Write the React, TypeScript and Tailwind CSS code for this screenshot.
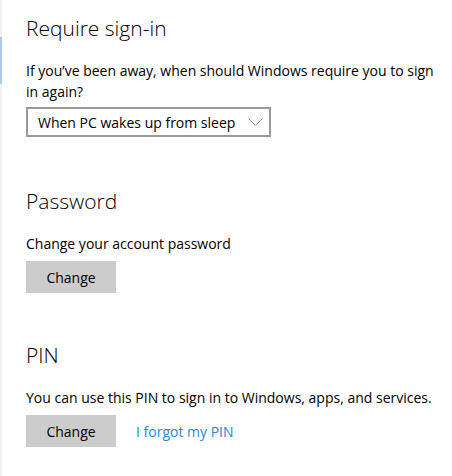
export default function App() {
  const font = { fontFamily: '"Open Sans", "Noto Sans", sans-serif' }
  return (
    <div className="flex w-[452px] h-[476px] bg-white text-black" style={font}>
      {/* left edge of nav pane */}
      <div className="flex flex-col w-[2px] bg-[#f2f2f2]">
        <div className="h-[37px]" />
        <div className="h-[47px] bg-[#a9cbea]" />
      </div>
      <div className="flex flex-col pl-[24px] pt-[14px]">
        <h2 className="text-[21px] leading-[28px] font-light">Require sign-in</h2>
        <p className="mt-[18px] text-[14px] leading-[21px] w-[420px]">
          If you’ve been away, when should Windows require you to sign in again?
        </p>
        <div className="mt-[5px] flex items-center justify-between w-[245px] h-[30px] border-2 border-[#999999] pl-[10px] pr-[6px]">
          <span className="text-[14px]">When PC wakes up from sleep</span>
          <svg width="15" height="8" viewBox="0 0 15 8" fill="none" stroke="#8a8a8a" strokeWidth="1">
            <path d="M0.5 0.5l7 7 7-7" />
          </svg>
        </div>

        <h2 className="mt-[50px] text-[21px] leading-[28px] font-light">Password</h2>
        <p className="mt-[18px] text-[14px] leading-[21px]">Change your account password</p>
        <button className="mt-[7px] w-[90px] h-[32px] bg-[#cccccc] text-[14px]">Change</button>

        <h2 className="mt-[48px] text-[21px] leading-[28px] font-light">PIN</h2>
        <p className="mt-[18px] text-[14px] leading-[21px]">
          You can use this PIN to sign in to Windows, apps, and services.
        </p>
        <div className="mt-[7px] flex items-center gap-[20px]">
          <button className="w-[90px] h-[32px] bg-[#cccccc] text-[14px]">Change</button>
          <span className="text-[14px] text-[#2d87d3]">I forgot my PIN</span>
        </div>
      </div>
    </div>
  )
}
